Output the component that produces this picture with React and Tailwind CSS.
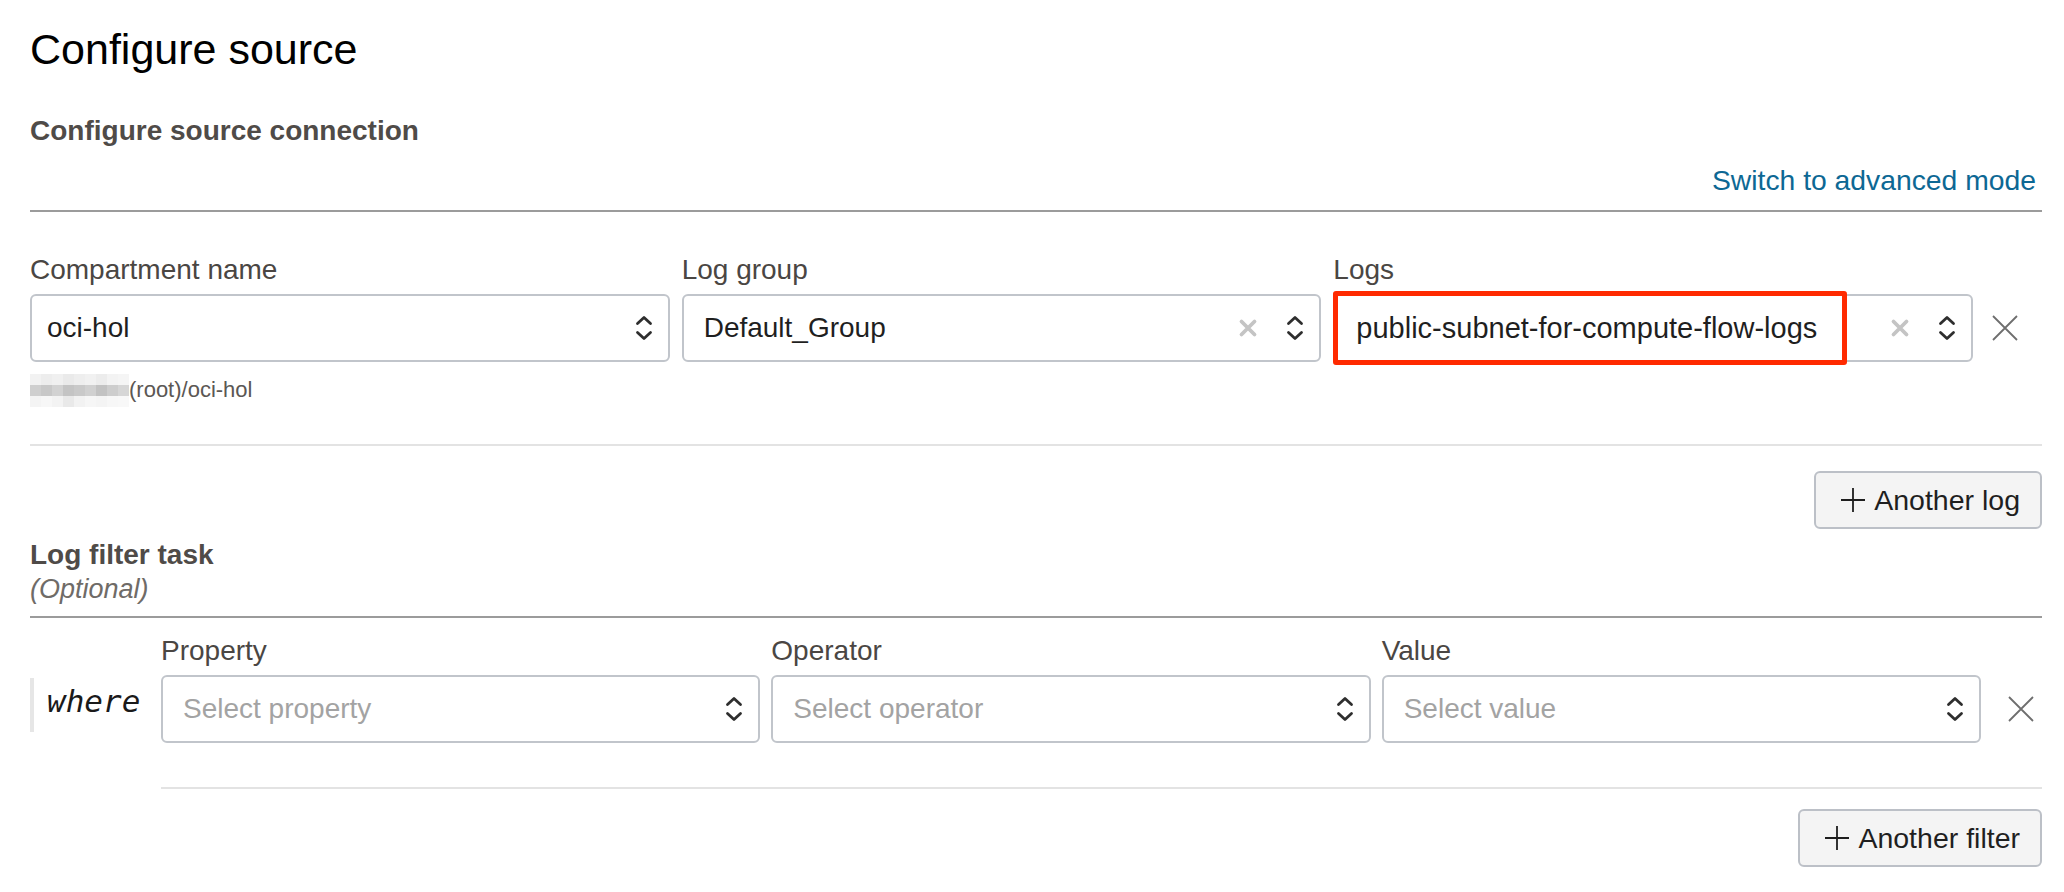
import React from "react";

const Chevrons = () => (
  <svg width="18" height="28" viewBox="0 0 18 28" fill="none" stroke="#2e2e2e" strokeWidth="2.8" strokeLinecap="round" strokeLinejoin="round">
    <path d="M2.5 9.5 L9 3.5 L15.5 9.5" />
    <path d="M2.5 18.5 L9 24.5 L15.5 18.5" />
  </svg>
);

const Clear = () => (
  <svg width="20" height="20" viewBox="0 0 20 20" fill="none" stroke="#c4c4c4" strokeWidth="3.8" strokeLinecap="round">
    <path d="M3.5 3.5 L16.5 16.5 M16.5 3.5 L3.5 16.5" />
  </svg>
);

const Remove = () => (
  <svg width="28" height="28" viewBox="0 0 28 28" fill="none" stroke="#6e6e6e" strokeWidth="1.8">
    <path d="M2 2 L26 26 M26 2 L2 26" />
  </svg>
);

const Plus = () => (
  <svg width="26" height="26" viewBox="0 0 26 26" fill="none" stroke="#1e1e1e" strokeWidth="1.8">
    <path d="M13 1 V25 M1 13 H25" />
  </svg>
);

function Select({ value, placeholder, clear, padLeft, size }) {
  return (
    <div className={"flex items-center h-[68px] rounded-[6px] border-2 border-[#c1c5cb] bg-white pr-[15px] " + padLeft}>
      {value ? (
        <span className={"flex-1 truncate leading-[34px] text-[#1f1f1f] " + (size || "text-[28px]")}>{value}</span>
      ) : (
        <span className="flex-1 truncate text-[28px] leading-[34px] text-[#a3a3a3]">{placeholder}</span>
      )}
      {clear && (
        <span className="mr-[28px] flex items-center">
          <Clear />
        </span>
      )}
      <Chevrons />
    </div>
  );
}

function Label({ children }) {
  return <div className="text-[28px] leading-[36px] text-[#4a4643]">{children}</div>;
}

function Button({ children }) {
  return (
    <button className="flex items-center gap-[8px] h-[58px] pl-[24px] pr-[20px] rounded-[6px] border-2 border-[#bcc0c7] bg-[#f4f4f4] text-[28.5px] leading-[34px] text-[#1f1f1f]">
      <Plus />
      <span>{children}</span>
    </button>
  );
}

const blur = [
  ["#f2f2f2", "#ededed", "#f0f0f0", "#eaeaea", "#eeeeee", "#f1f1f1", "#ececec", "#f3f3f3", "#f5f5f5"],
  ["#cfcfcf", "#c8c8c8", "#d2d2d2", "#c4c4c4", "#c9c9c9", "#d0d0d0", "#c2c2c2", "#cdcdcd", "#d6d6d6"],
  ["#f4f4f4", "#f7f7f7", "#f3f3f3", "#e9e9e9", "#f2f2f2", "#f6f6f6", "#f4f4f4", "#f7f7f7", "#f8f8f8"],
];

export default function App() {
  return (
    <div className="w-full h-[892px] bg-white pl-[30px] pr-[22px] font-['Liberation_Sans',Arial,sans-serif] overflow-hidden">
      <h1 className="pt-[22px] text-[43px] leading-[54px] text-black font-normal">Configure source</h1>
      <h2 className="mt-[37px] text-[28px] leading-[36px] font-bold text-[#4f4b48]">Configure source connection</h2>
      <div className="mt-[13px] flex justify-end">
        <span className="text-[28.3px] leading-[36px] text-[#0d6894] pr-[6px]">Switch to advanced mode</span>
      </div>
      <div className="mt-[12px] h-[2px] bg-[#9b9b9b]" />

      <div className="mt-[40px] grid grid-cols-[1fr_1fr_1fr_57px] gap-x-[12px] gap-y-[6px]">
        <Label>Compartment name</Label>
        <Label>Log group</Label>
        <Label>Logs</Label>
        <div />
        <Select value="oci-hol" padLeft="pl-[15px]" />
        <Select value="Default_Group" clear padLeft="pl-[20px]" />
        <div className="relative">
          <Select value="public-subnet-for-compute-flow-logs" clear padLeft="pl-[21px]" size="text-[29px]" />
          <div className="absolute left-[0px] top-[-3px] w-[514px] h-[74px] border-[5px] border-[#ff2a00] rounded-[3px]" />
        </div>
        <div className="flex items-center pl-[6px]">
          <Remove />
        </div>
      </div>

      <div className="mt-[11px] flex items-center h-[34px]">
        <div className="flex flex-col">
          {blur.map((row, i) => (
            <div key={i} className="flex">
              {row.map((c, j) => (
                <div key={j} className="w-[11px] h-[11px]" style={{ backgroundColor: c }} />
              ))}
            </div>
          ))}
        </div>
        <span className="text-[22px] leading-[30px] text-[#5b5754]">(root)/oci-hol</span>
      </div>

      <div className="mt-[37px] h-[2px] bg-[#e3e3e3]" />

      <div className="mt-[25px] flex justify-end">
        <Button>Another log</Button>
      </div>

      <div className="mt-[9px] text-[28px] leading-[34px] font-bold text-[#4f4b48]">Log filter task</div>
      <div className="text-[27px] leading-[34px] italic text-[#6f6b67]">(Optional)</div>
      <div className="mt-[10px] h-[2px] bg-[#9b9b9b]" />

      <div className="mt-[15px] grid grid-cols-[120px_1fr_1fr_1fr_50px] gap-x-[11px] gap-y-[6px]">
        <div />
        <Label>Property</Label>
        <Label>Operator</Label>
        <Label>Value</Label>
        <div />
        <div className="flex items-start">
          <div className="mt-[3px] flex items-center h-[54px] border-l-[4px] border-[#e6e6e6] pl-[13px]">
            <span className="font-['DejaVu_Sans_Mono',monospace] italic text-[31px] leading-[40px] text-[#1a1a1a] mt-[-8px]">where</span>
          </div>
        </div>
        <Select placeholder="Select property" padLeft="pl-[20px]" />
        <Select placeholder="Select operator" padLeft="pl-[20px]" />
        <Select placeholder="Select value" padLeft="pl-[20px]" />
        <div className="flex items-center pl-[15px]">
          <Remove />
        </div>
      </div>

      <div className="mt-[44px] ml-[131px] h-[2px] bg-[#e3e3e3]" />

      <div className="mt-[20px] flex justify-end">
        <Button>Another filter</Button>
      </div>
    </div>
  );
}
